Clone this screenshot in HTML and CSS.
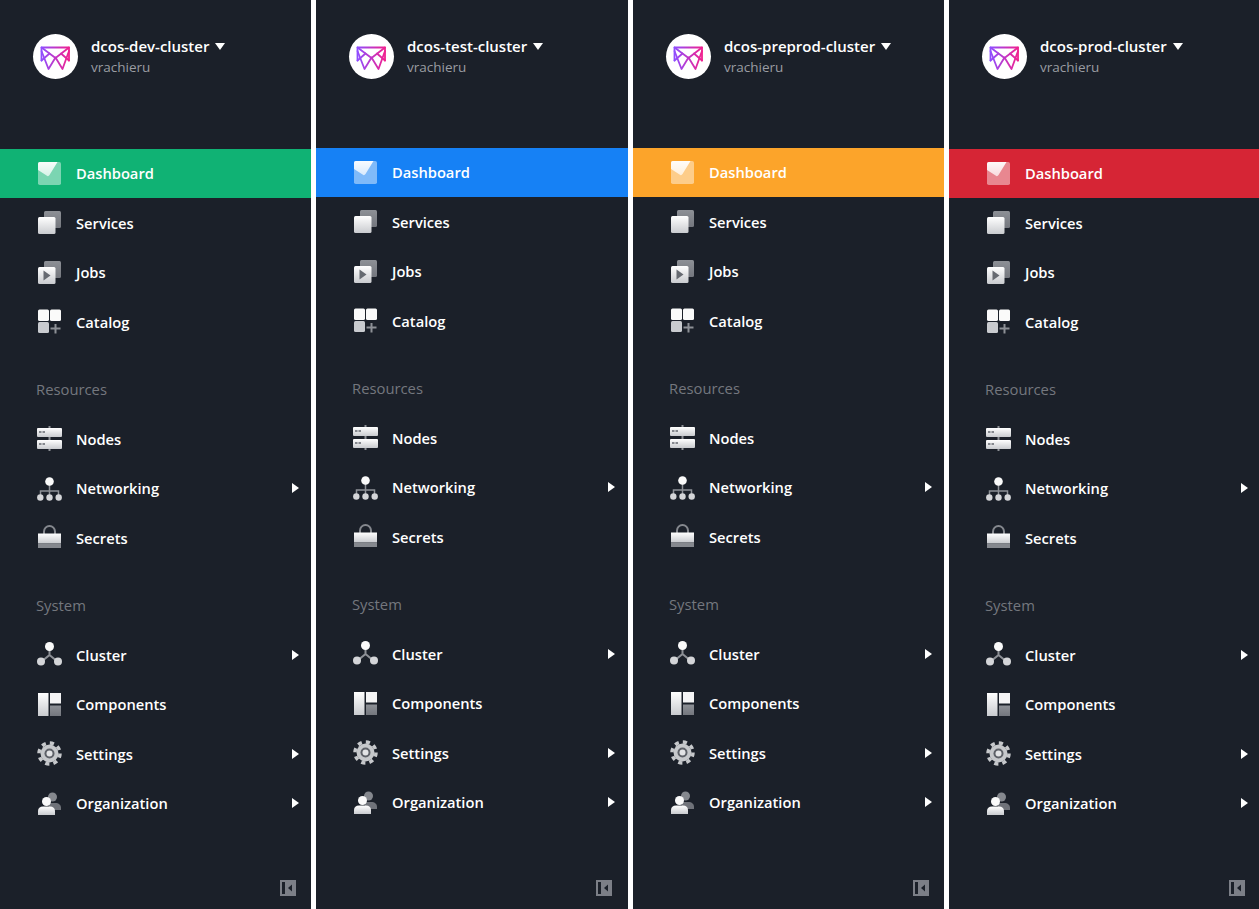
FILE: index.html
```html
<!DOCTYPE html>
<html lang="en">
<head>
    <meta charset="UTF-8">
    <title>DC/OS clusters</title>
    <link rel="stylesheet" href="styles.css">
</head>
<body>

<!-- shared icons -->
<svg class="icon-defs" aria-hidden="true">
    <defs>
        <linearGradient id="lightFade" x1="0" y1="0" x2="0" y2="1">
            <stop offset="0" stop-color="#fff"/>
            <stop offset="1" stop-color="#c9cbcf"/>
        </linearGradient>
        <linearGradient id="greyFade" x1="0" y1="0" x2="0" y2="1">
            <stop offset="0" stop-color="#8d9096"/>
            <stop offset="1" stop-color="#74777e"/>
        </linearGradient>
        <linearGradient id="checkFade" x1="0" y1="0" x2="0" y2="1">
            <stop offset="0" stop-color="#fff" stop-opacity="0.95"/>
            <stop offset="1" stop-color="#fff" stop-opacity="0.7"/>
        </linearGradient>
        <linearGradient id="logoFade" x1="0" y1="0" x2="1" y2="0">
            <stop offset="0" stop-color="#8f4dff"/>
            <stop offset="1" stop-color="#f0208f"/>
        </linearGradient>

        <symbol id="i-logo" viewBox="0 0 45 45">
            <g fill="none" stroke="url(#logoFade)" stroke-width="1.800" stroke-linejoin="round" stroke-linecap="round">
                <path d="M8.500 13.500h27.500v13M8.500 13.500v13"/>
                <path d="M8.500 13.500l14 10.500 13.500-10.500"/>
                <path d="M8.500 17l7 18 7-11.500 7 11.500 6.500-18"/>
                <path d="M8.500 26.500l8-7M36 26.500l-8-7"/>
            </g>
        </symbol>
        <symbol id="i-dashboard" viewBox="0 0 25 25">
            <rect x="1" y="1" width="23" height="23" rx="1.800" fill="#fff" fill-opacity="0.45"/>
            <path d="M1 9V2.800A1.800 1.800 0 0 1 2.800 1H20.500L12.500 14a2 2 0 0 1-2.900 .6z" fill="url(#checkFade)"/>
        </symbol>
        <symbol id="i-services" viewBox="0 0 25 25">
            <rect x="7" y="1" width="17" height="17" rx="1.500" fill="url(#greyFade)"/>
            <rect x="1" y="7" width="17.500" height="17" rx="1.500" fill="url(#lightFade)"/>
        </symbol>
        <symbol id="i-jobs" viewBox="0 0 25 25">
            <rect x="7" y="1" width="17" height="17" rx="1.500" fill="url(#greyFade)"/>
            <rect x="1" y="7" width="17.500" height="17" rx="1.500" fill="url(#lightFade)"/>
            <path d="M6.500 10.500l7 5-7 5z" fill="#666a71"/>
        </symbol>
        <symbol id="i-catalog" viewBox="0 0 25 25">
            <rect x="1" y="0.500" width="11" height="11.500" rx="1.500" fill="#fafafa"/>
            <rect x="13" y="0.500" width="11" height="11.500" rx="1.500" fill="#fafafa"/>
            <rect x="1" y="13" width="11" height="11" rx="1.500" fill="#c9cbcf"/>
            <path d="M17.500 15h2v3.500h4v2h-4v4h-2v-4h-4v-2h4z" fill="#8d9096"/>
        </symbol>
        <symbol id="i-nodes" viewBox="0 0 25 25">
            <rect x="11.500" y="0" width="2" height="25" fill="#8d9096"/>
            <rect x="0" y="2" width="25" height="9" rx="1" fill="url(#lightFade)"/>
            <rect x="0" y="14" width="25" height="9" rx="1" fill="url(#lightFade)"/>
            <path d="M2 5h2.500v2H2zM5.500 5h2.500v2H5.500zM2 17h2.500v2H2zM5.500 17h2.500v2H5.500z" fill="#85888e"/>
        </symbol>
        <symbol id="i-networking" viewBox="0 0 25 25">
            <path d="M12.500 6v15M3.500 21v-6h18v6" fill="none" stroke="#8d9096" stroke-width="1.500"/>
            <circle cx="12.500" cy="5.500" r="4.300" fill="#fafafa"/>
            <circle cx="3.300" cy="21.500" r="3.200" fill="#d4d5d8"/>
            <circle cx="12.500" cy="21.500" r="3.200" fill="#d4d5d8"/>
            <circle cx="21.700" cy="21.500" r="3.200" fill="#d4d5d8"/>
        </symbol>
        <symbol id="i-secrets" viewBox="0 0 25 25">
            <path d="M7 10V6.500a5.500 5.500 0 0 1 11 0V10" fill="none" stroke="#85888e" stroke-width="2"/>
            <rect x="1" y="8.500" width="23" height="10" fill="url(#lightFade)"/>
            <rect x="1" y="18.500" width="23" height="4.500" fill="#85888e"/>
        </symbol>
        <symbol id="i-cluster" viewBox="0 0 25 25">
            <path d="M12.500 5v8L4 20M12.500 13l8.500 7" fill="none" stroke="#8d9096" stroke-width="2"/>
            <circle cx="12.500" cy="4.500" r="4.500" fill="#fafafa"/>
            <circle cx="4" cy="19.500" r="4" fill="#d4d5d8"/>
            <circle cx="21" cy="19.500" r="4" fill="#d4d5d8"/>
        </symbol>
        <symbol id="i-components" viewBox="0 0 25 25">
            <rect x="1" y="1" width="10.500" height="23" fill="url(#lightFade)"/>
            <rect x="13" y="1" width="11" height="10.500" fill="#f4f4f5"/>
            <rect x="13" y="13.500" width="11" height="10.500" fill="url(#greyFade)"/>
        </symbol>
        <symbol id="i-settings" viewBox="0 0 25 25">
            <circle cx="12.500" cy="12.500" r="10.500" fill="none" stroke="#c6c8cb" stroke-width="3.500" stroke-dasharray="4.200 4.050"/>
            <circle cx="12.500" cy="12.500" r="9" fill="#c6c8cb"/>
            <circle cx="12.500" cy="12.500" r="5" fill="#5d6067"/>
            <circle cx="12.500" cy="12.500" r="3" fill="#e2e3e5"/>
        </symbol>
        <symbol id="i-organization" viewBox="0 0 25 25">
            <circle cx="15.500" cy="6" r="4.500" fill="#85888e"/>
            <path d="M12 12h6c4 0 6 2 6 5v2H12z" fill="#6f7279"/>
            <circle cx="9.500" cy="10.500" r="4.500" fill="#fafafa"/>
            <path d="M1 24v-4c0-3 2-4.500 5-4.500h7c3 0 5 1.500 5 4.500v4z" fill="url(#lightFade)"/>
        </symbol>
        <symbol id="i-collapse" viewBox="0 0 16 16">
            <rect width="16" height="16" fill="#7c7f87"/>
            <rect x="2" y="2" width="3" height="12" fill="#1b2029"/>
            <path d="M8 8l4-3.500v7z" fill="#1b2029"/>
        </symbol>
    </defs>
</svg>

<div class="panels">

    <aside class="panel panel-dev">
        <header class="cluster-head">
            <div class="avatar"><svg class="avatar-logo"><use href="#i-logo"/></svg></div>
            <div class="cluster-info">
                <div class="cluster-name">dcos-dev-cluster <span class="caret"></span></div>
                <div class="cluster-user">vrachieru</div>
            </div>
        </header>
        <nav class="menu">
            <a class="item active"><svg class="icon"><use href="#i-dashboard"/></svg><span class="label">Dashboard</span></a>
            <a class="item"><svg class="icon"><use href="#i-services"/></svg><span class="label">Services</span></a>
            <a class="item"><svg class="icon"><use href="#i-jobs"/></svg><span class="label">Jobs</span></a>
            <a class="item"><svg class="icon"><use href="#i-catalog"/></svg><span class="label">Catalog</span></a>
            <div class="section">Resources</div>
            <a class="item"><svg class="icon"><use href="#i-nodes"/></svg><span class="label">Nodes</span></a>
            <a class="item"><svg class="icon"><use href="#i-networking"/></svg><span class="label">Networking</span><span class="arrow"></span></a>
            <a class="item"><svg class="icon"><use href="#i-secrets"/></svg><span class="label">Secrets</span></a>
            <div class="section">System</div>
            <a class="item"><svg class="icon"><use href="#i-cluster"/></svg><span class="label">Cluster</span><span class="arrow"></span></a>
            <a class="item"><svg class="icon"><use href="#i-components"/></svg><span class="label">Components</span></a>
            <a class="item"><svg class="icon"><use href="#i-settings"/></svg><span class="label">Settings</span><span class="arrow"></span></a>
            <a class="item"><svg class="icon"><use href="#i-organization"/></svg><span class="label">Organization</span><span class="arrow"></span></a>
        </nav>
        <footer class="panel-foot"><svg class="collapse"><use href="#i-collapse"/></svg></footer>
    </aside>

    <aside class="panel panel-test tight">
        <header class="cluster-head">
            <div class="avatar"><svg class="avatar-logo"><use href="#i-logo"/></svg></div>
            <div class="cluster-info">
                <div class="cluster-name">dcos-test-cluster <span class="caret"></span></div>
                <div class="cluster-user">vrachieru</div>
            </div>
        </header>
        <nav class="menu">
            <a class="item active"><svg class="icon"><use href="#i-dashboard"/></svg><span class="label">Dashboard</span></a>
            <a class="item"><svg class="icon"><use href="#i-services"/></svg><span class="label">Services</span></a>
            <a class="item"><svg class="icon"><use href="#i-jobs"/></svg><span class="label">Jobs</span></a>
            <a class="item"><svg class="icon"><use href="#i-catalog"/></svg><span class="label">Catalog</span></a>
            <div class="section">Resources</div>
            <a class="item"><svg class="icon"><use href="#i-nodes"/></svg><span class="label">Nodes</span></a>
            <a class="item"><svg class="icon"><use href="#i-networking"/></svg><span class="label">Networking</span><span class="arrow"></span></a>
            <a class="item"><svg class="icon"><use href="#i-secrets"/></svg><span class="label">Secrets</span></a>
            <div class="section">System</div>
            <a class="item"><svg class="icon"><use href="#i-cluster"/></svg><span class="label">Cluster</span><span class="arrow"></span></a>
            <a class="item"><svg class="icon"><use href="#i-components"/></svg><span class="label">Components</span></a>
            <a class="item"><svg class="icon"><use href="#i-settings"/></svg><span class="label">Settings</span><span class="arrow"></span></a>
            <a class="item"><svg class="icon"><use href="#i-organization"/></svg><span class="label">Organization</span><span class="arrow"></span></a>
        </nav>
        <footer class="panel-foot"><svg class="collapse"><use href="#i-collapse"/></svg></footer>
    </aside>

    <aside class="panel panel-preprod tight">
        <header class="cluster-head">
            <div class="avatar"><svg class="avatar-logo"><use href="#i-logo"/></svg></div>
            <div class="cluster-info">
                <div class="cluster-name">dcos-preprod-cluster <span class="caret"></span></div>
                <div class="cluster-user">vrachieru</div>
            </div>
        </header>
        <nav class="menu">
            <a class="item active"><svg class="icon"><use href="#i-dashboard"/></svg><span class="label">Dashboard</span></a>
            <a class="item"><svg class="icon"><use href="#i-services"/></svg><span class="label">Services</span></a>
            <a class="item"><svg class="icon"><use href="#i-jobs"/></svg><span class="label">Jobs</span></a>
            <a class="item"><svg class="icon"><use href="#i-catalog"/></svg><span class="label">Catalog</span></a>
            <div class="section">Resources</div>
            <a class="item"><svg class="icon"><use href="#i-nodes"/></svg><span class="label">Nodes</span></a>
            <a class="item"><svg class="icon"><use href="#i-networking"/></svg><span class="label">Networking</span><span class="arrow"></span></a>
            <a class="item"><svg class="icon"><use href="#i-secrets"/></svg><span class="label">Secrets</span></a>
            <div class="section">System</div>
            <a class="item"><svg class="icon"><use href="#i-cluster"/></svg><span class="label">Cluster</span><span class="arrow"></span></a>
            <a class="item"><svg class="icon"><use href="#i-components"/></svg><span class="label">Components</span></a>
            <a class="item"><svg class="icon"><use href="#i-settings"/></svg><span class="label">Settings</span><span class="arrow"></span></a>
            <a class="item"><svg class="icon"><use href="#i-organization"/></svg><span class="label">Organization</span><span class="arrow"></span></a>
        </nav>
        <footer class="panel-foot"><svg class="collapse"><use href="#i-collapse"/></svg></footer>
    </aside>

    <aside class="panel panel-prod">
        <header class="cluster-head">
            <div class="avatar"><svg class="avatar-logo"><use href="#i-logo"/></svg></div>
            <div class="cluster-info">
                <div class="cluster-name">dcos-prod-cluster <span class="caret"></span></div>
                <div class="cluster-user">vrachieru</div>
            </div>
        </header>
        <nav class="menu">
            <a class="item active"><svg class="icon"><use href="#i-dashboard"/></svg><span class="label">Dashboard</span></a>
            <a class="item"><svg class="icon"><use href="#i-services"/></svg><span class="label">Services</span></a>
            <a class="item"><svg class="icon"><use href="#i-jobs"/></svg><span class="label">Jobs</span></a>
            <a class="item"><svg class="icon"><use href="#i-catalog"/></svg><span class="label">Catalog</span></a>
            <div class="section">Resources</div>
            <a class="item"><svg class="icon"><use href="#i-nodes"/></svg><span class="label">Nodes</span></a>
            <a class="item"><svg class="icon"><use href="#i-networking"/></svg><span class="label">Networking</span><span class="arrow"></span></a>
            <a class="item"><svg class="icon"><use href="#i-secrets"/></svg><span class="label">Secrets</span></a>
            <div class="section">System</div>
            <a class="item"><svg class="icon"><use href="#i-cluster"/></svg><span class="label">Cluster</span><span class="arrow"></span></a>
            <a class="item"><svg class="icon"><use href="#i-components"/></svg><span class="label">Components</span></a>
            <a class="item"><svg class="icon"><use href="#i-settings"/></svg><span class="label">Settings</span><span class="arrow"></span></a>
            <a class="item"><svg class="icon"><use href="#i-organization"/></svg><span class="label">Organization</span><span class="arrow"></span></a>
        </nav>
        <footer class="panel-foot"><svg class="collapse"><use href="#i-collapse"/></svg></footer>
    </aside>

</div>

</body>
</html>
```

FILE: styles.css
```css
html, body {
    margin: 0;
    height: 100%;
    overflow: hidden;
    background-color: #fff;
}
body {
    font-family: 'Open Sans', 'Noto Sans', sans-serif;
    color: #fff;
}
.icon-defs {
    display: block;
    width: 0;
    height: 0;
}
.panels {
    display: grid;
    grid-template-columns: 311px 312px 311px 310px;
    column-gap: 5px;
    height: 909px;
}
.panel {
    display: flex;
    flex-direction: column;
    background-color: #1b2029;
}
.panel-dev { --accent: #10b274; }
.panel-test { --accent: #1681f5; }
.panel-preprod { --accent: #fca42a; }
.panel-prod { --accent: #d62535; }

.cluster-head {
    display: flex;
    align-items: flex-start;
    height: 115px;
    padding: 34px 0 0 33px;
}
.tight .cluster-head {
    height: 114px;
}
.avatar {
    flex: none;
    width: 45px;
    height: 45px;
    border-radius: 50%;
    background-color: #fff;
}
.avatar-logo {
    display: block;
    width: 45px;
    height: 45px;
}
.cluster-info {
    margin-left: 13px;
    padding-top: 2px;
}
.cluster-name {
    display: flex;
    align-items: center;
    font-size: 15px;
    font-weight: 600;
    line-height: 21px;
    white-space: nowrap;
}
.caret {
    width: 0;
    height: 0;
    margin-left: 6px;
    margin-top: -1px;
    border-left: 5.5px solid transparent;
    border-right: 5.5px solid transparent;
    border-top: 7px solid #fff;
}
.cluster-user {
    font-size: 13.5px;
    line-height: 20px;
    color: #9a9ca2;
}
.item {
    display: flex;
    align-items: center;
    height: 49.5px;
    padding-left: 37px;
    font-size: 14.7px;
    font-weight: 600;
}
.item.active {
    box-sizing: border-box;
    height: 49px;
    padding-bottom: 1px;
    background-color: var(--accent);
}
.icon {
    flex: none;
    width: 25px;
    height: 25px;
}
.label {
    flex: none;
    width: 215px;
    margin-left: 14px;
}
.arrow {
    width: 0;
    height: 0;
    margin-left: 1px;
    border-top: 5.5px solid transparent;
    border-bottom: 5.5px solid transparent;
    border-left: 7px solid #fff;
}
.section {
    display: flex;
    align-items: center;
    height: 49.5px;
    margin-top: 18px;
    padding-left: 36px;
    font-size: 14.8px;
    color: #74777e;
}
.panel-foot {
    display: flex;
    margin-top: auto;
    padding: 0 0 13px 280px;
}
.collapse {
    width: 16px;
    height: 16px;
}
```
